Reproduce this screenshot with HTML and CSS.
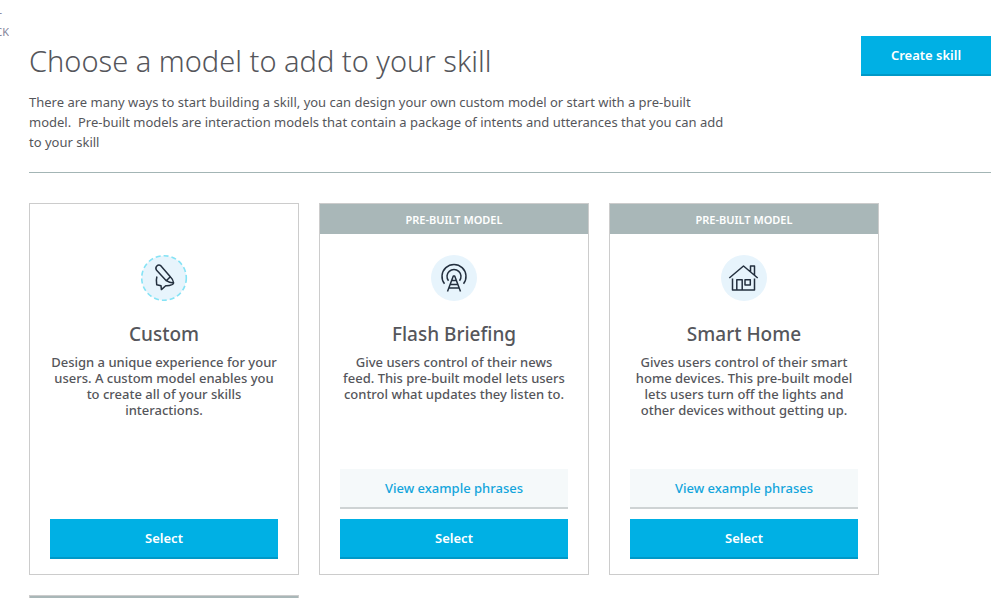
FILE: index.html
```html
<!DOCTYPE html>
<html lang="en">
<head>
<meta charset="utf-8">
<title>Choose a model</title>
<link rel="stylesheet" href="styles.css">
</head>
<body>
<div class="page">
  <aside class="rail"><span>-</span><span>CK</span></aside>
  <main class="content">
    <header class="header">
      <div class="intro">
        <h1 class="title">Choose a model to add to your skill</h1>
        <p class="lead">There are many ways to start building a skill, you can design your own custom model or start with a pre-built<br>model.&nbsp; Pre-built models are interaction models that contain a package of intents and utterances that you can add<br>to your skill</p>
      </div>
      <button class="button create" type="button">Create skill</button>
    </header>
    <section class="cards">
      <article class="card">
        <div class="body">
          <svg class="icon" viewBox="0 0 48 48" aria-hidden="true">
            <circle class="disc dashed" cx="24" cy="24" r="22.3"/>
            <path class="ink" d="M26.300 26.700 16.600 16.200c-2.200-3 1.400-6.600 4.400-4.300L30.300 22.700zM30.300 22.700c2 1.800 3 4 3.300 6.200-2.500-.1-5-.6-7.300-2.200M16.900 22.500c-.7 2.500-.7 5.500-.2 8.200l4.300 1 .4 3.900 4.300-3.900c2.500.2 4.500-.3 6.300-1.100 1-.5 1.600-1 1.600-1.700"/>
          </svg>
          <h2 class="name">Custom</h2>
          <p class="text">Design a unique experience for your<br>users. A custom model enables you<br>to create all of your skills<br>interactions.</p>
          <div class="actions"><button class="button" type="button">Select</button></div>
        </div>
      </article>
      <article class="card">
        <div class="tag">PRE-BUILT MODEL</div>
        <div class="body">
          <svg class="icon" viewBox="0 0 48 48" aria-hidden="true">
            <circle class="disc" cx="24" cy="24" r="23"/>
            <path class="ink" d="M14.500 29.800a12 12 0 1 1 19 0M18.500 26.800a7 7 0 1 1 11 0M17.500 37.500 23.300 22h1.400l5.800 15.500M21.800 26.500h4.400M20.500 30.500h7M19 34h10"/>
          </svg>
          <h2 class="name">Flash Briefing</h2>
          <p class="text">Give users control of their news<br>feed. This pre-built model lets users<br>control what updates they listen to.</p>
          <div class="actions"><button class="button quiet" type="button">View example phrases</button><button class="button" type="button">Select</button></div>
        </div>
      </article>
      <article class="card">
        <div class="tag">PRE-BUILT MODEL</div>
        <div class="body">
          <svg class="icon" viewBox="0 0 48 48" aria-hidden="true">
            <circle class="disc" cx="24" cy="24" r="23"/>
            <path class="ink" d="M9.300 24 23.500 12l14.200 12M30.500 17.500v-5.500h4v9M12.500 24.500v11.500h22V24.500M16.800 36V25.700h5.400V36M25 25.700h5.300v5.300H25z"/>
          </svg>
          <h2 class="name">Smart Home</h2>
          <p class="text">Gives users control of their smart<br>home devices. This pre-built model<br>lets users turn off the lights and<br>other devices without getting up.</p>
          <div class="actions"><button class="button quiet" type="button">View example phrases</button><button class="button" type="button">Select</button></div>
        </div>
      </article>
      <article class="card">
        <div class="tag"></div>
      </article>
    </section>
  </main>
</div>
</body>
</html>
```
FILE: styles.css
```css
* { box-sizing: border-box; }
body {
  margin: 0;
  height: 100vh;
  overflow: hidden;
  background: #fff;
  color: #55565b;
  font-family: "Noto Sans", "Open Sans", sans-serif;
}
h1, h2, p { margin: 0; }
.page { display: flex; }
.rail {
  display: flex;
  flex: none;
  flex-direction: column;
  align-items: flex-end;
  width: 9px;
  padding-top: 2px;
  overflow: hidden;
  color: #85859b;
  font-size: 11px;
  line-height: 20px;
}
.rail span:first-child { padding-right: 7px; }
.content { flex: 1; min-width: 0; padding: 36px 9px 0 20px; }
.header {
  display: flex;
  align-items: flex-start;
  justify-content: space-between;
  padding-bottom: 20px;
  border-bottom: 1px solid #a3b5b5;
}
.intro { white-space: nowrap; }
.title { padding-top: 3px; font-size: 29px; font-weight: 300; line-height: 44px; }
.lead { padding-top: 9px; font-size: 13px; line-height: 20px; }
.cards {
  display: grid;
  grid-template-columns: repeat(auto-fill, 270px);
  gap: 20px;
  padding-top: 30px;
}
.card {
  display: flex;
  flex-direction: column;
  min-height: 372px;
  border: 1px solid #ccc;
}
.tag {
  height: 30px;
  background: #a9b7b8;
  color: #fff;
  font-size: 11px;
  font-weight: 600;
  line-height: 31px;
  text-align: center;
}
.body {
  display: flex;
  flex: 1;
  flex-direction: column;
  align-items: center;
  padding: 20px 20px 15px;
  text-align: center;
}
.card > .body:first-child { padding-top: 50px; }
.icon { width: 48px; height: 48px; }
.disc { fill: #e7f4fc; }
.dashed { stroke: #86e3f5; stroke-width: 1.600; stroke-dasharray: 5 3; }
.ink { fill: none; stroke: #232f3e; stroke-width: 1.500; stroke-linejoin: round; }
.name { padding-top: 16px; font-size: 19px; font-weight: 500; line-height: 32px; }
.text { padding-top: 4px; font-size: 13px; font-weight: 500; line-height: 16px; white-space: nowrap; }
.actions { display: grid; gap: 10px; width: 100%; margin-top: auto; }
.button {
  height: 40px;
  padding: 1px 0 0;
  border: 0;
  border-bottom: 2px solid #0099c7;
  background: #00b0e4;
  color: #fff;
  font: 600 13px/37px "Noto Sans", "Open Sans", sans-serif;
}
.create { flex: none; width: 130px; }
.quiet { border-color: #ced3d4; background: #f5f9fa; color: #12a5dc; font-weight: 500; }
```
